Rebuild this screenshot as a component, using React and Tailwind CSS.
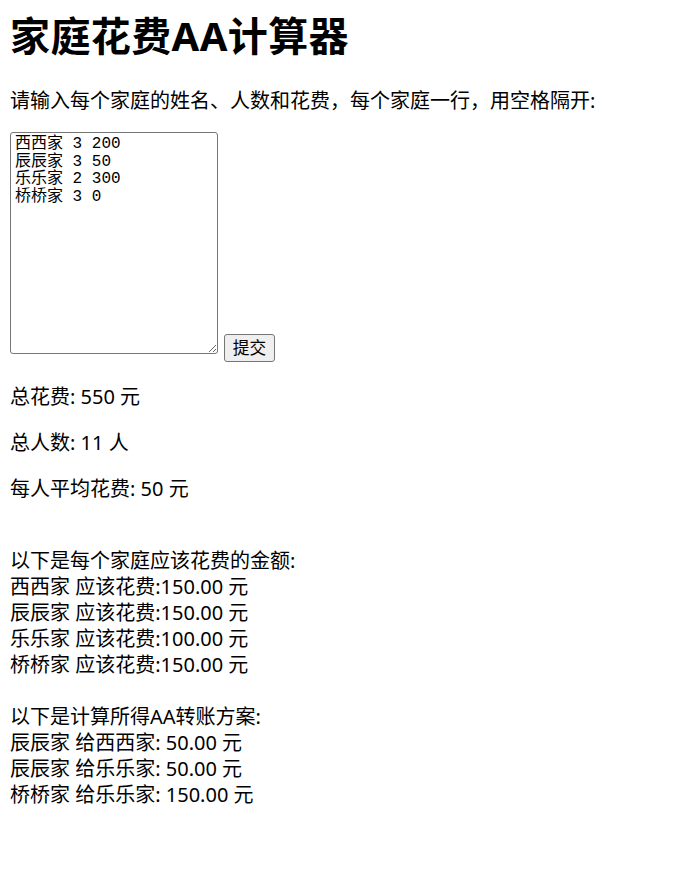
export default function App() {
  const families = [
    { name: "西西家", share: "150.00" },
    { name: "辰辰家", share: "150.00" },
    { name: "乐乐家", share: "100.00" },
    { name: "桥桥家", share: "150.00" },
  ];
  const transfers = [
    { from: "辰辰家", to: "西西家", amount: "50.00" },
    { from: "辰辰家", to: "乐乐家", amount: "50.00" },
    { from: "桥桥家", to: "乐乐家", amount: "150.00" },
  ];

  return (
    <div className="min-h-screen bg-white px-[10px] pt-[10px] text-black font-['Noto_Sans','Noto_Sans_CJK_SC',sans-serif] text-[20px] leading-[26px]">
      <h1 className="text-[40px] font-bold leading-[52px] mb-[26px] tracking-[0.4px]">家庭花费AA计算器</h1>

      <p className="mb-[18px]">请输入每个家庭的姓名、人数和花费，每个家庭一行，用空格隔开:</p>

      <div className="flex items-end gap-[6px]">
        <textarea
          defaultValue={"西西家 3 200\n辰辰家 3 50\n乐乐家 2 300\n桥桥家 3 0"}
          className="w-[208px] h-[222px] mb-[8px] border border-[#767676] rounded-[3px] px-[4px] pt-[3px] pb-[2px] bg-white font-['Liberation_Mono','Noto_Sans_CJK_SC',monospace] text-[16px] leading-[17.7px] outline-none"
        />
        <button className="h-[28px] w-[51px] border border-[#767676] rounded-[3px] bg-[#efefef] text-[16.7px] leading-none">
          提交
        </button>
      </div>

      <div className="mt-[22px] flex flex-col gap-[20px]">
        <p>总花费: 550 元</p>
        <p>总人数: 11 人</p>
        <p>每人平均花费: 50 元</p>
      </div>

      <div className="mt-[46px]">
        <div>以下是每个家庭应该花费的金额:</div>
        {families.map((f) => (
          <div key={f.name}>
            {f.name} 应该花费:{f.share} 元
          </div>
        ))}
        <div className="h-[26px]" />
        <div>以下是计算所得AA转账方案:</div>
        {transfers.map((t, i) => (
          <div key={i}>
            {t.from} 给{t.to}: {t.amount} 元
          </div>
        ))}
      </div>
    </div>
  );
}
